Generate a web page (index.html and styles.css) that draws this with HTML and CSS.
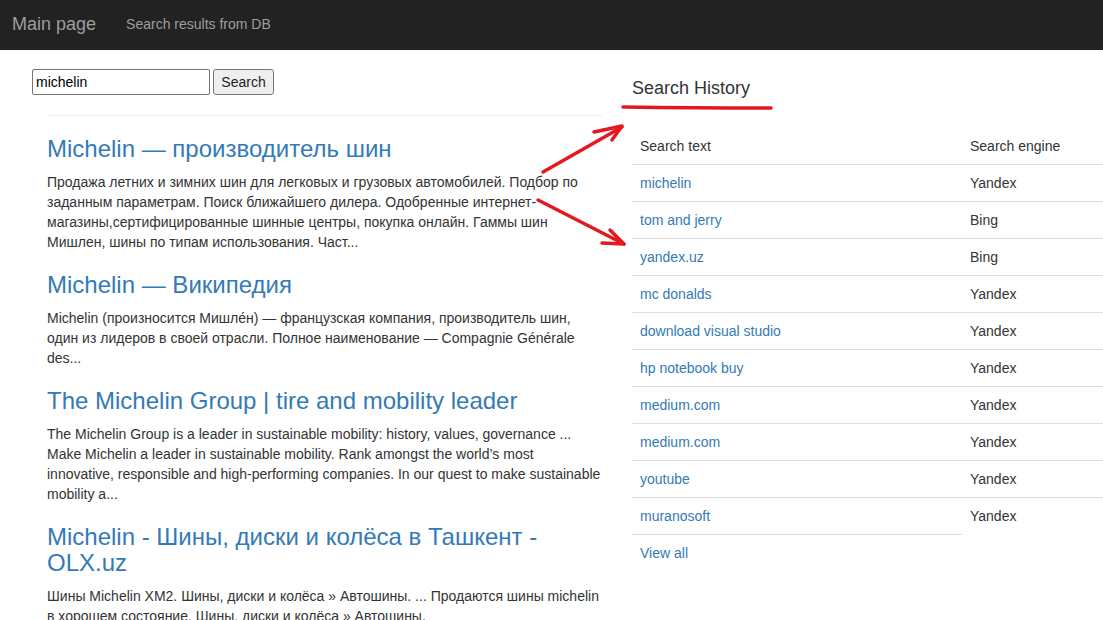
FILE: index.html
```html
<!DOCTYPE html>
<html lang="en">
<head>
<meta charset="utf-8">
<title>Main page</title>
<link rel="stylesheet" href="styles.css">
</head>
<body>
<nav class="navbar">
  <a class="brand" href="#">Main page</a>
  <a class="nav-link" href="#">Search results from DB</a>
</nav>
<main class="page">
  <section class="left-col">
    <form class="search-form">
      <input class="search-input" type="text" value="michelin">
      <button class="search-btn" type="button">Search</button>
    </form>
    <div class="results">
      <hr class="divider">
      <div class="result">
        <h3 class="result-title"><a href="#">Michelin — производитель шин</a></h3>
        <p class="result-text">Продажа летних и зимних шин для легковых и грузовых автомобилей. Подбор по заданным параметрам. Поиск ближайшего дилера. Одобренные интернет-магазины,сертифицированные шинные центры, покупка онлайн. Гаммы шин Мишлен, шины по типам использования. Част...</p>
      </div>
      <div class="result">
        <h3 class="result-title"><a href="#">Michelin — Википедия</a></h3>
        <p class="result-text">Michelin (произносится Мишле́н) — французская компания, производитель шин, один из лидеров в своей отрасли. Полное наименование — Compagnie Générale des...</p>
      </div>
      <div class="result">
        <h3 class="result-title"><a href="#">The Michelin Group | tire and mobility leader</a></h3>
        <p class="result-text">The Michelin Group is a leader in sustainable mobility: history, values, governance ... Make Michelin a leader in sustainable mobility. Rank amongst the world’s most innovative, responsible and high-performing companies. In our quest to make sustainable mobility a...</p>
      </div>
      <div class="result">
        <h3 class="result-title"><a href="#">Michelin - Шины, диски и колёса в Ташкент - OLX.uz</a></h3>
        <p class="result-text">Шины Michelin XM2. Шины, диски и колёса » Автошины. ... Продаются шины michelin в хорошем состояние. Шины, диски и колёса » Автошины.</p>
      </div>
    </div>
  </section>
  <section class="right-col">
    <h4 class="history-title">Search History</h4>
    <table class="history">
      <thead>
        <tr><th class="col-text">Search text</th><th>Search engine</th></tr>
      </thead>
      <tbody>
        <tr><td><a href="#">michelin</a></td><td>Yandex</td></tr>
        <tr><td><a href="#">tom and jerry</a></td><td>Bing</td></tr>
        <tr><td><a href="#">yandex.uz</a></td><td>Bing</td></tr>
        <tr><td><a href="#">mc donalds</a></td><td>Yandex</td></tr>
        <tr><td><a href="#">download visual studio</a></td><td>Yandex</td></tr>
        <tr><td><a href="#">hp notebook buy</a></td><td>Yandex</td></tr>
        <tr><td><a href="#">medium.com</a></td><td>Yandex</td></tr>
        <tr><td><a href="#">medium.com</a></td><td>Yandex</td></tr>
        <tr><td><a href="#">youtube</a></td><td>Yandex</td></tr>
        <tr><td><a href="#">muranosoft</a></td><td>Yandex</td></tr>
        <tr class="view-all"><td><a href="#">View all</a></td></tr>
      </tbody>
    </table>
  </section>
</main>
<svg class="annotations" width="1103" height="620" viewBox="0 0 1103 620" aria-hidden="true">
  <g fill="none" stroke="#e4191f" stroke-linecap="round" stroke-linejoin="round">
    <path d="M623 107 Q700 108 771 108" stroke-width="3.5"/>
    <path d="M543 172 L622 127" stroke-width="3.5"/>
    <path d="M594 132 L622 126 L612 140" stroke-width="3.5"/>
    <path d="M538 200 L624 244" stroke-width="3.5"/>
    <path d="M610 230 L624 244 L602 243" stroke-width="3.5"/>
  </g>
</svg>
</body>
</html>
```
FILE: styles.css
```css
html, body {
  margin: 0;
  padding: 0;
  overflow: hidden;
}
body {
  font-family: "Liberation Sans", Arial, sans-serif;
  font-size: 14px;
  line-height: 20px;
  color: #333;
  background: #fff;
  position: relative;
  width: 1103px;
  height: 620px;
}
a {
  color: #337ab7;
  text-decoration: none;
}
.navbar {
  display: flex;
  align-items: center;
  height: 50px;
  background: #222;
  padding-left: 12px;
}
.brand {
  font-size: 18px;
  line-height: 20px;
  color: #9d9d9d;
  padding-right: 15px;
  margin-top: -2px;
}
.nav-link {
  font-size: 14px;
  color: #9d9d9d;
  padding: 0 15px;
  margin-top: -2px;
}
.page {
  display: flex;
  gap: 30px;
  padding: 19px 0 0 32px;
}
.left-col {
  width: 570px;
  flex-shrink: 0;
}
.search-form {
  display: flex;
  gap: 3px;
  margin: 0;
}
.search-input {
  box-sizing: border-box;
  width: 178px;
  height: 26px;
  border: 1px solid #767676;
  border-radius: 2px;
  padding: 1px 3px;
  font-family: "Liberation Sans", Arial, sans-serif;
  font-size: 14px;
  color: #000;
}
.search-btn {
  box-sizing: border-box;
  width: 61px;
  height: 26px;
  border: 1px solid #767676;
  border-radius: 3px;
  background: #efefef;
  font-family: "Liberation Sans", Arial, sans-serif;
  font-size: 14px;
  color: #222;
  padding: 0;
}
.results {
  margin-left: 15px;
}
.divider {
  border: 0;
  border-top: 1px solid #eee;
  margin: 20px 0 0 0;
}
.result-title {
  font-size: 24px;
  font-weight: 500;
  line-height: 26px;
  margin: 20px 0 10px;
}
.result-text {
  margin: 0 0 10px;
}
.right-col {
  width: 471px;
  flex-shrink: 0;
}
.history-title {
  font-size: 18px;
  font-weight: 500;
  line-height: 20px;
  margin: 9px 0 30px;
}
.history {
  width: 471px;
  border-collapse: collapse;
  border-spacing: 0;
}
.history th {
  text-align: left;
  font-weight: normal;
  padding: 8px;
  line-height: 20px;
  border-bottom: 1px solid #ddd;
}
.history .col-text {
  width: 314px;
}
.history td {
  padding: 8px;
  line-height: 20px;
  border-top: 1px solid #ddd;
}
.annotations {
  position: absolute;
  left: 0;
  top: 0;
  pointer-events: none;
}
```
